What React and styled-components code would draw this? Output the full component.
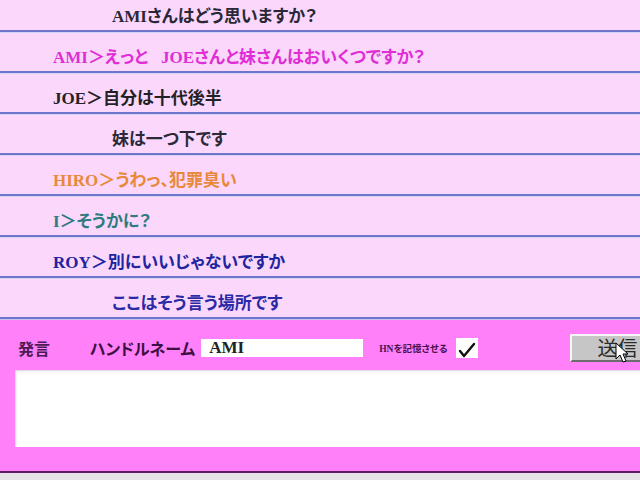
import styled, { createGlobalStyle } from 'styled-components'

const GlobalStyle = createGlobalStyle`
  html, body {
    margin: 0;
    padding: 0;
    overflow: hidden;
    background: #e6e4e6;
  }
  body {
    font-family: "Liberation Serif", "Noto Sans CJK JP", serif;
  }
`

const messages = [
  { text: 'AMIさんはどう思いますか？', color: '#2a2838', cont: true },
  { text: 'AMI＞えっと\u2002 JOEさんと妹さんはおいくつですか？', color: '#e02ed6' },
  { text: 'JOE＞自分は十代後半', color: '#222226' },
  { text: '妹は一つ下です', color: '#2c2a38', cont: true },
  { text: 'HIRO＞うわっ、犯罪臭い', color: '#e8893a' },
  { text: 'I＞そうかに？', color: '#2e7c80' },
  { text: 'ROY＞別にいいじゃないですか', color: '#2024a0' },
  { text: 'ここはそう言う場所です', color: '#2a2aa6', cont: true },
]

function App() {
  return (
    <Page>
      <GlobalStyle />
      <Log>
        {messages.map((m, i) => (
          <Row key={i} $color={m.color} $cont={m.cont}>
            {m.text}
          </Row>
        ))}
      </Log>
      <Panel>
        <Header>
          <Label>発言</Label>
          <NameLabel>ハンドルネーム</NameLabel>
          <NameInput defaultValue="AMI" />
          <SmallLabel>HNを記憶させる</SmallLabel>
          <CheckBox>
            <svg width="22" height="20" viewBox="0 0 22 20">
              <path d="M4 13 L8 18 L18 6" fill="none" stroke="#111" strokeWidth="2.4" strokeLinecap="round" strokeLinejoin="round" />
            </svg>
          </CheckBox>
          <SendButton>
            送信
            <Cursor width="14" height="22" viewBox="0 0 14 22">
              <path d="M1 1 L1 17 L5 13 L8 20 L11 19 L8 12 L13 12 Z" fill="#fff" stroke="#000" strokeWidth="1" strokeLinejoin="round" />
            </Cursor>
          </SendButton>
        </Header>
        <Message />
      </Panel>
      <Footer />
    </Page>
  )
}

const Page = styled.div`
  width: 680px;
`

const Log = styled.div`
  height: 319px;
  overflow: hidden;
  display: flex;
  flex-direction: column;
  justify-content: flex-end;
  background: #fbd8fb;
`

const Row = styled.div`
  flex: none;
  height: 41px;
  box-sizing: border-box;
  border-top: 1px solid #d4d4f6;
  border-bottom: 2px solid #6e76cc;
  padding: 15px 0 0 ${(p) => (p.$cont ? '112px' : '53px')};
  font-size: 17px;
  line-height: 20px;
  font-weight: bold;
  color: ${(p) => p.$color};
  white-space: nowrap;
  font-feature-settings: "palt";
`

const Panel = styled.div`
  border-top: 1px solid #cbc4f2;
  border-bottom: 2px solid #5a1c62;
  background: #ff80f8;
  padding: 14px 0 24px 15px;
`

const Header = styled.div`
  display: flex;
  align-items: center;
  height: 28px;
`

const Label = styled.span`
  margin-left: 3px;
  width: 72px;
  font-size: 16px;
  font-weight: bold;
  color: #4c1a54;
`

const NameLabel = styled.span`
  font-size: 16px;
  font-weight: bold;
  color: #3c1044;
  font-feature-settings: "palt";
`

const NameInput = styled.input`
  margin-left: 6px;
  width: 162px;
  height: 18px;
  box-sizing: border-box;
  border: none;
  outline: none;
  background: #fff;
  padding: 0 0 0 8px;
  font-family: "Liberation Serif", serif;
  font-size: 17px;
  font-weight: bold;
  color: #222;
`

const SmallLabel = styled.span`
  margin-left: 16px;
  font-size: 9.5px;
  font-weight: bold;
  color: #4a1050;
  white-space: nowrap;
  font-feature-settings: "palt";
`

const CheckBox = styled.span`
  margin-left: 8px;
  width: 22px;
  height: 20px;
  background: #fff;
  display: flex;
`

const SendButton = styled.button`
  position: relative;
  margin-left: 92px;
  width: 90px;
  height: 28px;
  box-sizing: border-box;
  background: #c6c6c6;
  border: 2px solid;
  border-color: #f6f6f6 #6c6c6c #6c6c6c #f6f6f6;
  padding: 0 0 0 26px;
  text-align: left;
  font-family: "Noto Sans CJK JP", sans-serif;
  font-size: 20px;
  line-height: 24px;
  color: #2a2a2a;
`

const Cursor = styled.svg`
  position: absolute;
  left: 43px;
  top: 6px;
`

const Message = styled.textarea`
  display: block;
  margin-top: 8px;
  width: 680px;
  height: 77px;
  box-sizing: border-box;
  border: none;
  outline: none;
  resize: none;
  background: #fff;
  box-shadow: inset 1px 1px 2px rgba(120, 60, 120, 0.25);
`

const Footer = styled.div`
  height: 8px;
  background: #e6e4e6;
`

export default App
